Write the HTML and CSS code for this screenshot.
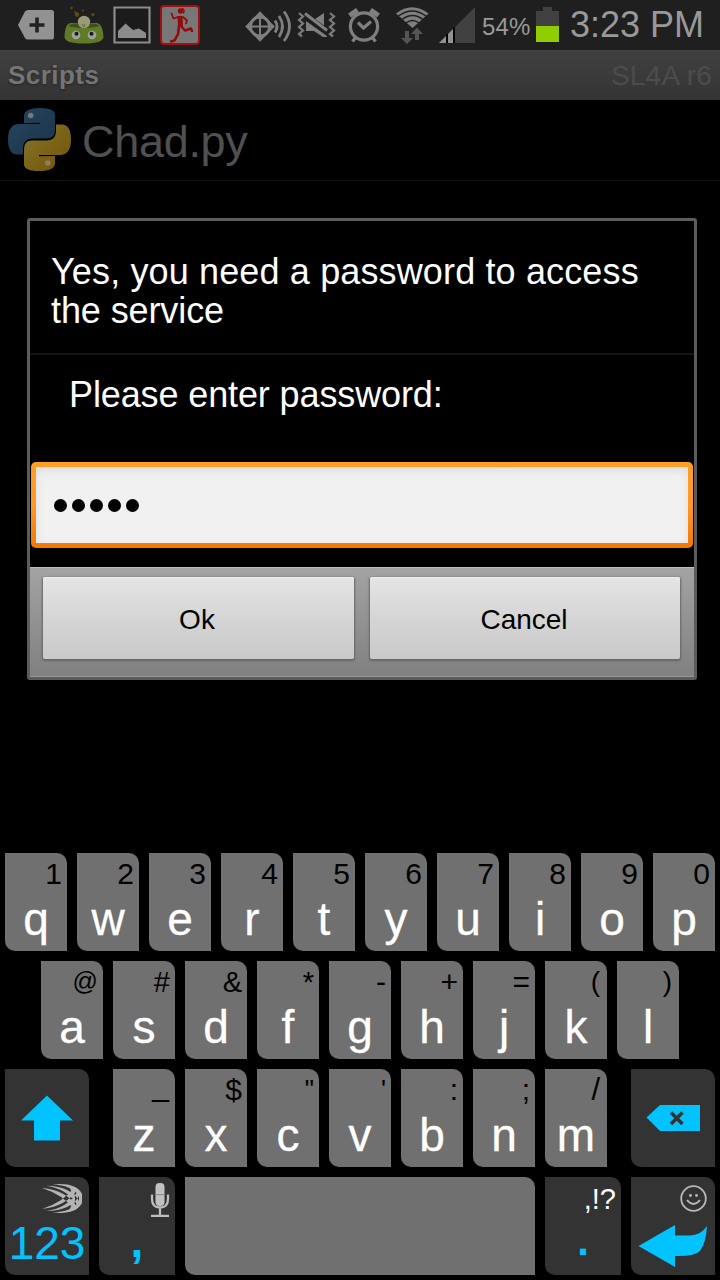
FILE: index.html
```html
<!DOCTYPE html>
<html lang="en">
<head>
<meta charset="utf-8">
<title>Scripts</title>
<link rel="stylesheet" href="styles.css">
</head>
<body>
<header class="status">
  <svg class="ic-notify" viewBox="0 0 210 50">
    <path d="M18 25 25 11.500Q26 10 28 10H51.500Q54 10 54 12.500V37Q54 39.500 51.500 39.500H28Q26 39.500 25 38Z" fill="#929292"/>
    <path d="M37 17.500V32.500M29.500 25H44.500" stroke="#222" stroke-width="3.600"/>
    <path d="M64.500 37Q65 23 71 23H97Q103 24 103.500 37Q103 43.500 84 43.500T64.500 37Z" fill="#617a28"/>
    <ellipse cx="84" cy="25.500" rx="15" ry="2.500" fill="#3d511b"/>
    <circle cx="84" cy="22" r="6.200" fill="#989b77"/>
    <path d="M82 24 84 27 85 24" fill="none" stroke="#65683d"/>
    <circle cx="76" cy="35" r="4.300" fill="#a0a0a0"/><circle cx="92" cy="35" r="4.300" fill="#a0a0a0"/>
    <circle cx="76.500" cy="33.800" r="2" fill="#161b12"/><circle cx="91.500" cy="33.800" r="2" fill="#161b12"/>
    <g fill="#604b16"><circle cx="77" cy="14.500" r="2.200"/><circle cx="71.500" cy="8" r="1.200"/><circle cx="83" cy="10.500" r="1"/><circle cx="93" cy="14.500" r="1.600"/><circle cx="75" cy="12" r="1"/></g>
    <path d="M114.500 7.500H149.500V42.500H114.500Z" fill="#1b1b1b" stroke="#8c8c8c" stroke-width="2.200"/>
    <path d="M118 38V31L125.500 23.500 133 30 139 28.500 146 33V38Z" fill="#8c8c8c"/>
    <rect x="161" y="6" width="38" height="38" rx="3" fill="#777" stroke="#a20f11" stroke-width="2"/>
    <g fill="none" stroke="#930b0b" stroke-linejoin="round" stroke-linecap="round">
      <path d="M180 16 180.500 27" stroke-width="5" stroke-linecap="butt"/>
      <path d="M178 17 173.500 18.500 171.500 13.500M183 17 187 20.500 186 23.500" stroke-width="1.800"/>
      <path d="M179 26 178 34 174.500 40.500 171 41.500" stroke-width="2.600"/>
      <path d="M181 26 185 30.500 191 28.500 192 31" stroke-width="2.400"/>
      <path d="M182.500 8.500Q185 10 183.500 13" stroke-width="1.300"/>
    </g>
    <circle cx="180.500" cy="11" r="2.700" fill="#930b0b"/>
  </svg>
  <svg class="ic-system" viewBox="240 0 236 50">
    <g fill="none" stroke="#7f7f7f">
      <path d="M260 13 273 26.500 260 40 247 26.500Z" stroke-width="2.500"/>
      <circle cx="260" cy="26.500" r="9.500" stroke-width="2.800"/>
      <path d="M260 13V40M246 26.500H274" stroke-width="2"/>
      <path d="M275 20.500Q279 26.500 275 32.500M279 16Q286 26.500 279 37M284 11.500Q295 26.500 284 41" stroke-width="2.800"/>
    </g>
    <path d="M315 19 324 13V25.500ZM306 21 327 36V37H323L314 31H306Z" fill="#7f7f7f"/>
    <path d="M305 13.500 327 30.500" stroke="#7f7f7f" stroke-width="3"/>
    <path d="M304 16.500 327 33.500" stroke="#1f1f1f" stroke-width="1.500"/>
    <path d="M299 13 303 16.500 299 20 303 23.500 299 27 303 30.500 299 34 302 36.500M330 13 334 16.500 330 20 334 23.500 330 27 334 30.500 330 34 333 36.500" fill="none" stroke="#7a7a7a" stroke-width="2.300"/>
    <g fill="none" stroke="#7f7f7f">
      <circle cx="364" cy="26.500" r="13.600" stroke-width="3.200"/>
      <path d="M358 22.500 363.500 28 371 21.500M356 37 352.500 41.500M372 37 375.500 41.500" stroke-width="3.200"/>
      <path d="M349.500 15.500 357.500 10M378.500 15.500 370.500 10" stroke-width="5"/>
    </g>
    <path d="M396 13.500Q412 1 428.500 13.500L412.500 28Z" fill="#7f7f7f"/>
    <path d="M398.500 16Q412 6 426 16M402 19.500Q412.500 11.500 423 19.500M406 23Q412.500 18 419 23" fill="none" stroke="#1f1f1f" stroke-width="1.400"/>
    <path d="M405 31H409V38H413L407 44 401 38H405ZM415 40V34H411L417 27.500 423 34H419V40Z" fill="#555"/>
    <path d="M439 43 475 7V43Z" fill="#414141"/>
    <path d="M439 43 446 36V43ZM448 43V34L453 29V43Z" fill="#929292"/>
    <path d="M447 34V43M454 27V43" stroke="#000" stroke-width="2"/>
  </svg>
  <span class="percent">54%</span>
  <svg class="ic-battery" viewBox="536 0 24 50"><path d="M536 11H543V7H552V11H559V26H536Z" fill="#414141"/><path d="M536 26H559V42H536Z" fill="#90ce00"/></svg>
  <span class="clock">3:23 PM</span>
</header>
<div class="titlebar"><span class="app">Scripts</span><span class="version">SL4A r6</span></div>
<div class="script">
  <svg class="python" viewBox="8 108 63 63">
    <defs>
      <linearGradient id="blue" x1="0" y1="0" x2="1" y2="1"><stop offset="0" stop-color="#28465f"/><stop offset="1" stop-color="#19334a"/></linearGradient>
      <linearGradient id="gold" x1="1" y1="1" x2="0" y2="0"><stop offset="0" stop-color="#837431"/><stop offset="1" stop-color="#735400"/></linearGradient>
    </defs>
    <path fill="url(#blue)" d="M24 123V116Q24 108 40 108T55 116V130Q55 138.500 47 138.500H32Q23 139 23 148V154.500H17Q8 154 8 139.500T18 124H40V122.700Z"/>
    <path fill="url(#gold)" transform="rotate(180 39.500 139.500)" d="M24 123V116Q24 108 40 108T55 116V130Q55 138.500 47 138.500H32Q23 139 23 148V154.500H17Q8 154 8 139.500T18 124H40V122.700Z"/>
    <circle cx="30.700" cy="115.500" r="2.800" fill="#777"/><circle cx="47.800" cy="163" r="2.800" fill="#8a805b"/>
  </svg>
  <span class="script-name">Chad.py</span>
</div>
<main class="dialog">
  <h1 class="heading"><span class="heading-first">Yes, you need a password to access</span><br><span class="heading-second">the service</span></h1>
  <p class="prompt"><span class="prompt-text">Please enter password:</span></p>
  <div class="field"><div class="field-inner"><i class="dot"></i><i class="dot"></i><i class="dot"></i><i class="dot"></i><i class="dot"></i></div></div>
  <div class="actions"><button class="btn ok">Ok</button><button class="btn cancel">Cancel</button></div>
</main>
<section class="keyboard">
  <div class="row">
    <div class="key"><span class="hint">1</span><span class="letter">q</span></div>
    <div class="key"><span class="hint">2</span><span class="letter">w</span></div>
    <div class="key"><span class="hint">3</span><span class="letter">e</span></div>
    <div class="key"><span class="hint">4</span><span class="letter">r</span></div>
    <div class="key"><span class="hint">5</span><span class="letter">t</span></div>
    <div class="key"><span class="hint">6</span><span class="letter">y</span></div>
    <div class="key"><span class="hint">7</span><span class="letter">u</span></div>
    <div class="key"><span class="hint">8</span><span class="letter">i</span></div>
    <div class="key"><span class="hint">9</span><span class="letter">o</span></div>
    <div class="key"><span class="hint">0</span><span class="letter">p</span></div>
  </div>
  <div class="row">
    <div class="key"><span class="hint at">@</span><span class="letter">a</span></div>
    <div class="key"><span class="hint small">#</span><span class="letter">s</span></div>
    <div class="key"><span class="hint small">&amp;</span><span class="letter">d</span></div>
    <div class="key"><span class="hint small">*</span><span class="letter">f</span></div>
    <div class="key"><span class="hint">-</span><span class="letter">g</span></div>
    <div class="key"><span class="hint">+</span><span class="letter">h</span></div>
    <div class="key"><span class="hint">=</span><span class="letter">j</span></div>
    <div class="key"><span class="hint paren">(</span><span class="letter">k</span></div>
    <div class="key"><span class="hint paren">)</span><span class="letter">l</span></div>
  </div>
  <div class="row">
    <div class="key dark wide shift"><svg class="face" viewBox="5 1069 84 98"><path d="M47 1095.500 73 1120.500H60V1140.500H34V1120.500H21Z" fill="#00c3ff"/></svg></div>
    <div class="key"><span class="hint underscore">_</span><span class="letter">z</span></div>
    <div class="key"><span class="hint">$</span><span class="letter">x</span></div>
    <div class="key"><span class="hint quote">"</span><span class="letter">c</span></div>
    <div class="key"><span class="hint quote">'</span><span class="letter">v</span></div>
    <div class="key"><span class="hint">:</span><span class="letter">b</span></div>
    <div class="key"><span class="hint">;</span><span class="letter">n</span></div>
    <div class="key"><span class="hint slash">/</span><span class="letter">m</span></div>
    <div class="key dark wide back"><svg class="face" viewBox="631 1069 84 98"><path d="M646.500 1117.500 660 1105H700V1131H660Z" fill="#00c3ff"/><path d="M671 1112.500 682.500 1124M682.500 1112.500 671 1124" stroke="#333" stroke-width="3.500"/></svg></div>
  </div>
  <div class="row">
    <div class="key dark wide numeric">
      <svg class="corner" viewBox="5 1177 84 40">
        <g fill="#b4b4b4">
          <path d="M42 1188Q67 1190 77.500 1208L74.500 1210Q64 1195 42 1188ZM42 1209Q67 1206 77.500 1189L74.500 1187Q64 1202 42 1209Z"/>
          <path d="M46 1185.800Q72 1186 80 1203L77.500 1205.500Q68 1189 46 1185.800ZM46 1211Q72 1211 80 1194L77.500 1191.500Q68 1208 46 1211Z"/>
          <path d="M52 1184.500Q76 1182 82 1194V1203Q76 1215 52 1212.500Q72 1212 79 1201V1196Q72 1185 52 1184.500Z"/>
        </g>
        <path d="M70 1186Q78 1198.500 70 1211" fill="none" stroke="#b4b4b4" stroke-width="2"/>
      </svg>
      <span class="numeric-label">123</span>
    </div>
    <div class="key dark medium comma">
      <svg class="corner" viewBox="99 1177 76 40">
        <rect x="155.500" y="1183" width="9" height="23" rx="4" fill="#c1c1c1"/>
        <path d="M152 1194.500V1199Q152 1207.500 160 1207.500T168 1199V1194.500M160 1208V1216M151 1216H169" stroke="#bcbcbc" stroke-width="2.300" fill="none"/>
        <path d="M155.500 1194.700H164.500" stroke="#888" stroke-width="1"/>
      </svg>
      <span class="mark">,</span>
    </div>
    <div class="key space"></div>
    <div class="key dark medium period"><span class="hint punct">,!?</span><span class="mark dot-mark">.</span></div>
    <div class="key dark wide enter"><svg class="face" viewBox="631 1177 84 98">
      <g fill="none" stroke="#b8b8b8" stroke-width="1.800"><circle cx="693.500" cy="1198.500" r="12.300"/><path d="M687 1200Q693.500 1208 700 1200"/></g>
      <circle cx="690.500" cy="1195.500" r="1.400" fill="#b8b8b8"/><circle cx="696.500" cy="1195.500" r="1.400" fill="#b8b8b8"/>
      <path d="M638.500 1246 675 1225V1235.500H690Q701 1235 707 1226Q706 1243 700 1251Q695 1256.500 675 1256V1267Z" fill="#00c3ff"/>
    </svg></div>
  </div>
</section>
</body>
</html>
```
FILE: styles.css
```css
* { box-sizing: border-box; }
body { margin: 0; width: 720px; height: 1280px; overflow: hidden; display: flex; flex-direction: column; background: #000; color: #fff; font-family: "Liberation Sans", Arial, sans-serif; }
svg { display: block; flex: none; }
.status { height: 50px; flex: none; display: flex; align-items: center; background: #1f1f1f; color: #999; white-space: nowrap; }
.ic-notify { width: 210px; height: 50px; margin-right: 30px; }
.ic-system { width: 236px; height: 50px; }
.percent { width: 60px; padding: 3px 0 0 6px; font-size: 24px; line-height: 30px; letter-spacing: .1px; }
.ic-battery { width: 24px; height: 50px; }
.clock { padding-left: 10px; font-size: 36px; line-height: 50px; }
.titlebar { height: 50px; flex: none; display: flex; justify-content: space-between; padding: 0 8px; line-height: 51px; font-size: 26px; background: linear-gradient(#404040, #3b3b3b 50%, #333); }
.app { font-weight: bold; color: #747474; letter-spacing: .45px; text-shadow: 0 1px 3px #222; }
.version { color: #4c4c4c; font-size: 28px; letter-spacing: .2px; }
.script { height: 81px; flex: none; display: flex; align-items: center; border-bottom: 1px solid #141414; padding-left: 8px; }
.python { width: 63px; height: 63px; margin-bottom: 2px; }
.script-name { margin-left: 11px; padding-top: 4px; font-size: 45px; line-height: 60px; letter-spacing: -.3px; color: #505050; }
.dialog { width: 670px; height: 462px; flex: none; margin: 37px 0 0 27px; border: 3px solid #5c5c5c; border-radius: 3px; display: flex; flex-direction: column; }
.heading { margin: 0; height: 134px; padding: 31px 21px 0; border-bottom: 2px solid #151515; font-size: 36px; line-height: 39px; font-weight: normal; white-space: nowrap; }
.heading-first { letter-spacing: .14px; }
.heading-second { letter-spacing: -.1px; }
.prompt { margin: 0; height: 107px; padding: 20px 39px; font-size: 36px; line-height: 40px; letter-spacing: -.12px; white-space: nowrap; }
.field { margin: 0 1px; height: 86px; padding: 5px; border-radius: 5px; background: linear-gradient(#ff9e28, #ff982a 50%, #f17803); }
.field-inner { height: 76px; display: flex; align-items: center; gap: 5px; padding: 0 18px; background: #f1f1f1; box-shadow: inset 0 4px 10px #dedede; }
.dot { width: 13px; height: 13px; border-radius: 50%; background: #000; }
.actions { height: 110px; margin-top: 19px; padding: 9px 14px 0 13px; display: flex; gap: 16px; align-items: flex-start; border-top: 1px solid #bbb; background: linear-gradient(#a3a3a3, #808080); box-shadow: inset 0 -1px #999; }
.btn { flex: 1; height: 82px; padding: 4px 0 0; border: 0; border-radius: 2px; font: 28px "Liberation Sans", Arial, sans-serif; color: #000; background: linear-gradient(#e5e5e5, #d5d5d5 50%, #c9c9c9); box-shadow: 0 1px 2px 1px #666, inset 0 1px #eee; }
.ok { padding-right: 3px; }
.cancel { padding-right: 2px; }
.keyboard { margin-top: 173px; padding: 0 5px; display: flex; flex-direction: column; gap: 10px; }
.row { display: flex; justify-content: center; gap: 10px; height: 98px; }
.key { width: 62px; height: 98px; flex: none; display: flex; flex-direction: column; border-radius: 0 10px 0 10px; background: #707070; }
.hint { height: 40px; padding-right: 5px; text-align: right; font-size: 30px; line-height: 41px; color: #000; }
.small { font-size: 29px; line-height: 42px; }
.at { font-size: 25px; line-height: 40px; }
.paren { font-size: 28px; padding-right: 7px; }
.quote { font-size: 26px; }
.underscore { line-height: 34px; padding-right: 6px; }
.slash { font-size: 31px; padding-right: 7px; }
.letter { height: 52px; text-align: center; font-size: 46px; line-height: 53px; -webkit-text-stroke: .3px #fff; }
.dark { background: #333; }
.wide { width: 84px; }
.medium { width: 76px; }
.space { width: 350px; }
.shift { margin-right: 14px; }
.back { margin-left: 14px; }
.face { width: 84px; height: 98px; }
.corner { width: 100%; height: 40px; }
.numeric-label { color: #00c3ff; font-size: 46px; line-height: 52px; text-align: center; }
.mark { color: #00c3ff; font-size: 46px; font-weight: bold; line-height: 48px; text-align: center; }
.dot-mark { font-size: 42px; }
.punct { color: #fff; font-size: 29px; line-height: 45px; }
```
